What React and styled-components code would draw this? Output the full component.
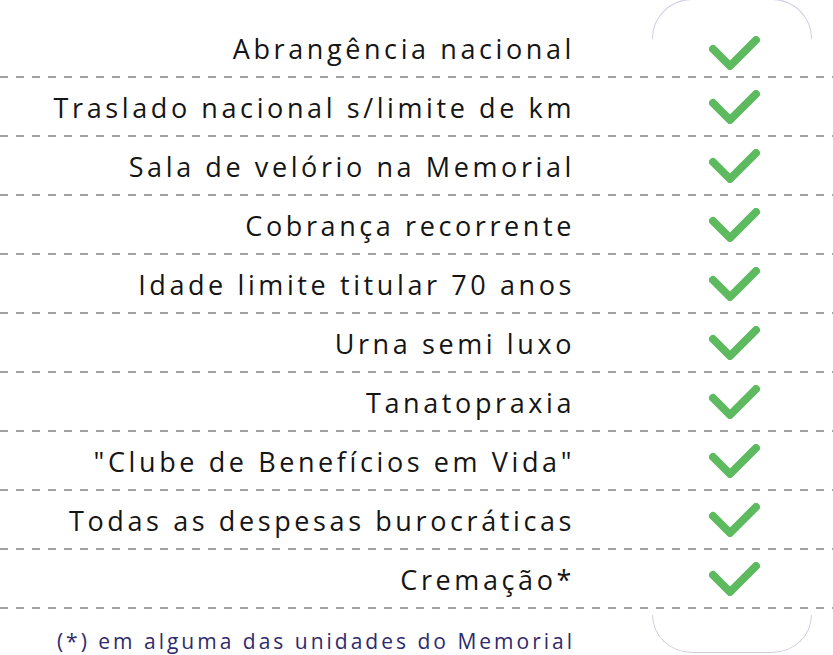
import React from 'react';
import styled, { createGlobalStyle } from 'styled-components';

const GlobalStyle = createGlobalStyle`
  html, body {
    margin: 0;
    padding: 0;
    background: #ffffff;
  }
  body {
    font-family: 'Open Sans', 'Liberation Sans', sans-serif;
    overflow: hidden;
  }
`;

const Table = styled.div`
  width: 833px;
  height: 655px;
  overflow: hidden;
  box-sizing: border-box;
`;

const Line = styled.div`
  display: grid;
  grid-template-columns: 1fr 160px;
  padding-right: 21px;
`;

const Cap = styled.div`
  grid-column: 2;
  box-sizing: border-box;
  height: 40px;
  border: 1px solid #cfcde0;
  border-bottom: none;
  border-radius: 40px 40px 0 0 / 39px 39px 0 0;
  margin-top: -1px;
  margin-bottom: -20px;
`;

const BottomCap = styled(Cap)`
  height: 38px;
  border: 1px solid #cfcde0;
  border-top: none;
  border-radius: 0 0 40px 40px / 0 0 38px 38px;
  margin-top: 6px;
  margin-bottom: 0;
`;

const Row = styled(Line)`
  height: 59px;
  box-sizing: border-box;
  padding-bottom: 2px;
  background: linear-gradient(to right, #a2a2a6 50%, transparent 50%) left bottom / 16px 2px repeat-x;
  align-items: center;
`;

const Label = styled.div`
  text-align: right;
  padding-right: 77px;
  padding-top: 2px;
  font-size: 27px;
  letter-spacing: 3.6px;
  color: #151515;
  white-space: nowrap;
`;

const Mark = styled.div`
  display: flex;
  align-items: center;
  padding-left: 57px;
  padding-top: ${(p) => (p.$first ? '10px' : '0')};
`;

const Footer = styled(Line)`
  height: 44px;
`;

const Note = styled.div`
  align-self: center;
  text-align: right;
  padding-right: 77px;
  padding-top: 18px;
  font-size: 21px;
  letter-spacing: 3px;
  color: #2f2b6c;
  white-space: nowrap;
`;

const Check = () => (
  <svg width="52" height="34" viewBox="0 0 52 34">
    <polyline
      points="4,13 21,30 47,4"
      fill="none"
      stroke="#5dba5f"
      strokeWidth="8"
      strokeLinecap="round"
      strokeLinejoin="round"
    />
  </svg>
);

const items = [
  'Abrangência nacional',
  'Traslado nacional s/limite de km',
  'Sala de velório na Memorial',
  'Cobrança recorrente',
  'Idade limite titular 70 anos',
  'Urna semi luxo',
  'Tanatopraxia',
  '"Clube de Benefícios em Vida"',
  'Todas as despesas burocráticas',
  'Cremação*',
];

export default function App() {
  return (
    <>
      <GlobalStyle />
      <Table>
        <Line>
          <Cap />
        </Line>
        {items.map((item, i) => (
          <Row key={item}>
            <Label>{item}</Label>
            <Mark $first={i === 0}>
              <Check />
            </Mark>
          </Row>
        ))}
        <Footer>
          <Note>(*) em alguma das unidades do Memorial</Note>
          <BottomCap />
        </Footer>
      </Table>
    </>
  );
}
